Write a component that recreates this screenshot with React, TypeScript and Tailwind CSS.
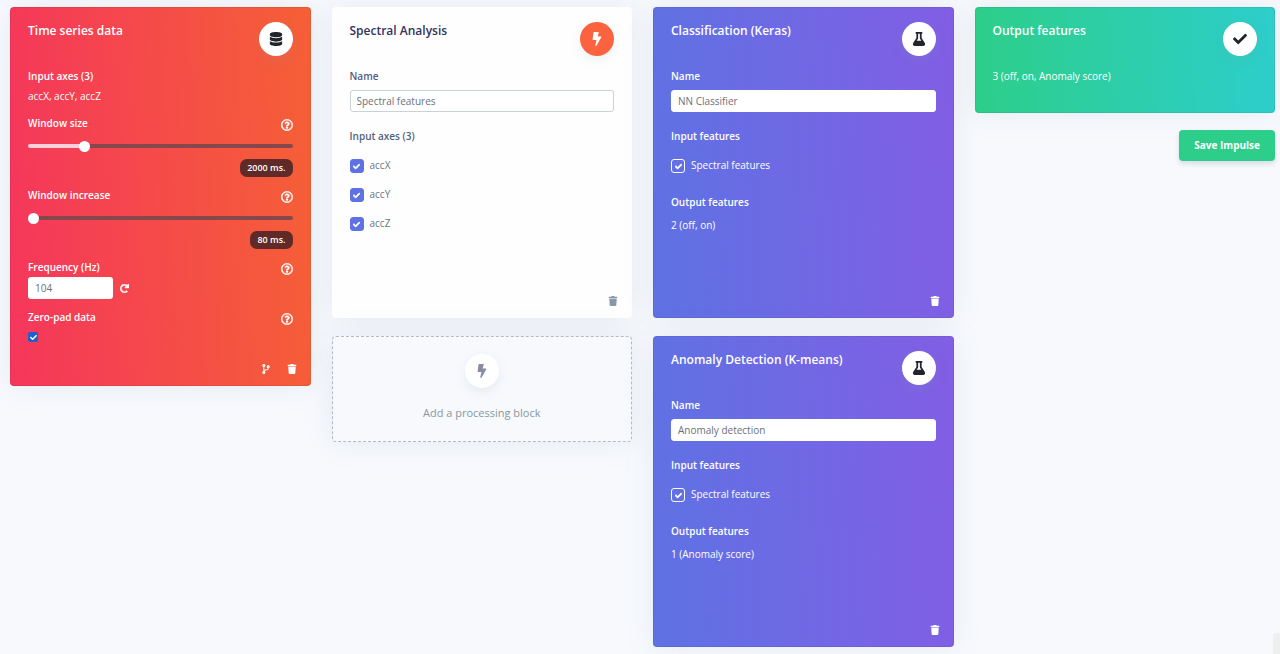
import { useId, useState } from "react";
import type { ReactNode } from "react";
import {
  FaBolt,
  FaCheck,
  FaCodeBranch,
  FaDatabase,
  FaFlask,
  FaRedo,
  FaRegQuestionCircle,
  FaTrash,
} from "react-icons/fa";

const softShadow = "shadow-[0_0_28px_rgba(136,152,170,0.15)]";
const edgedShadow =
  "shadow-[0_0_28px_rgba(136,152,170,0.15),inset_0_0_0_1px_rgba(0,0,0,0.06)]";

const tones = {
  data: `bg-[linear-gradient(87deg,#f5365c,#f56036)] text-white ${edgedShadow}`,
  plain: `bg-[#fefefe] text-[#525f7f] ${softShadow}`,
  learn: `bg-[linear-gradient(87deg,#5e72e4,#825ee4)] text-white ${edgedShadow}`,
  output: `bg-[linear-gradient(87deg,#2dce89,#2dcecc)] text-white ${edgedShadow}`,
};

function Card({
  tone,
  title,
  icon,
  className = "",
  children,
}: {
  tone: keyof typeof tones;
  title: string;
  icon: ReactNode;
  className?: string;
  children: ReactNode;
}) {
  const plain = tone === "plain";
  return (
    <section
      className={`flex flex-col rounded-[4px] px-[18px] pt-[15px] pb-3 ${tones[tone]} ${className}`}
    >
      <header className="mb-[10px] flex justify-between">
        <h2 className={`text-[12px] leading-[18px] font-semibold ${plain ? "text-[#32325d]" : ""}`}>
          {title}
        </h2>
        <span
          className={`flex size-[34px] items-center justify-center rounded-full text-[14px] shadow-[0_4px_12px_rgba(136,152,170,0.15)] ${
            plain ? "bg-[#fb6340] text-white" : "bg-white text-[#212529]"
          }`}
        >
          {icon}
        </span>
      </header>
      {children}
    </section>
  );
}

function HelpButton({ topic }: { topic: string }) {
  return (
    <button type="button" aria-label={`Help: ${topic}`} className="pt-1 text-[12px]">
      <FaRegQuestionCircle className="stroke-[16]" />
    </button>
  );
}

function DeleteButton() {
  return (
    <button type="button" aria-label="Delete block" className="text-[10px]">
      <FaTrash />
    </button>
  );
}

function SliderField({
  label,
  initial,
  min,
  max,
}: {
  label: string;
  initial: number;
  min: number;
  max: number;
}) {
  const id = useId();
  const [value, setValue] = useState(initial);
  const filled = ((value - min) / (max - min)) * 100;
  return (
    <div className="mb-2 flex flex-col">
      <div className="flex h-5 items-center justify-between">
        <label htmlFor={id} className="font-semibold">
          {label}
        </label>
        <HelpButton topic={label} />
      </div>
      <div className="flex h-[26px] items-center">
        <input
          id={id}
          type="range"
          min={min}
          max={max}
          step={80}
          value={value}
          onChange={(e) => setValue(Number(e.target.value))}
          style={{
            backgroundImage: `linear-gradient(to right, #fbd0dc ${filled}%, #86474d ${filled}%)`,
          }}
          className="h-1 w-full appearance-none rounded-[2px] [&::-webkit-slider-thumb]:size-[11px] [&::-webkit-slider-thumb]:appearance-none [&::-webkit-slider-thumb]:rounded-full [&::-webkit-slider-thumb]:bg-white"
        />
      </div>
      <output
        htmlFor={id}
        className="self-end rounded-[7px] bg-[#5f2a28] px-[7px] text-[9px] leading-[18px] font-semibold"
      >
        {value} ms.
      </output>
    </div>
  );
}

function NameField({ initial, bordered }: { initial: string; bordered?: boolean }) {
  const id = useId();
  return (
    <div className="mb-[14px] flex flex-col gap-1">
      <label htmlFor={id} className="font-semibold">
        Name
      </label>
      <input
        id={id}
        type="text"
        defaultValue={initial}
        className={`h-[22px] w-full rounded-[3px] border bg-white px-[6px] text-[10px] text-[#6b7177] ${
          bordered ? "border-[#cad1d7]" : "border-white"
        }`}
      />
    </div>
  );
}

function CheckRow({ label, outlined }: { label: string; outlined?: boolean }) {
  return (
    <label className={`flex items-start gap-[6px] ${outlined ? "" : "text-[#6c757d]"}`}>
      <span className="mt-[4px] grid size-[14px] place-items-center">
        <input
          type="checkbox"
          defaultChecked
          className={`peer col-start-1 row-start-1 size-[14px] appearance-none rounded-[3px] border ${
            outlined ? "border-white" : "border-[#5e72e4] checked:bg-[#5e72e4]"
          }`}
        />
        <FaCheck className="pointer-events-none invisible col-start-1 row-start-1 size-[7px] stroke-[40] text-white peer-checked:visible" />
      </span>
      {label}
    </label>
  );
}

function LearnCard({ title, name, outputs }: { title: string; name: string; outputs: string }) {
  return (
    <Card tone="learn" title={title} icon={<FaFlask />} className="min-h-[311px]">
      <NameField initial={name} />
      <h3 className="mb-[9px] font-semibold">Input features</h3>
      <CheckRow label="Spectral features" outlined />
      <h3 className="mt-[17px] mb-[3px] font-semibold">Output features</h3>
      <p>{outputs}</p>
      <footer className="mt-auto -mr-1 flex justify-end">
        <DeleteButton />
      </footer>
    </Card>
  );
}

export default function App() {
  return (
    <main className="relative min-h-screen overflow-hidden bg-[#f7f9fd] pt-[7px] pr-[5px] pb-[7px] pl-[10px] font-['Open_Sans',sans-serif] text-[10px] leading-[20px]">
      <div className="grid grid-cols-4 items-start gap-[21px]">
        <Card tone="data" title="Time series data" icon={<FaDatabase />}>
          <h3 className="font-semibold">Input axes (3)</h3>
          <p className="mb-[7px]">accX, accY, accZ</p>
          <SliderField label="Window size" initial={2000} min={80} max={9680} />
          <SliderField label="Window increase" initial={80} min={80} max={9680} />
          <div className="flex h-5 items-center justify-between">
            <label htmlFor="frequency" className="font-semibold">
              Frequency (Hz)
            </label>
            <HelpButton topic="Frequency" />
          </div>
          <div className="mb-2 flex items-center gap-[7px]">
            <input
              id="frequency"
              type="text"
              defaultValue="104"
              className="h-[22px] w-[85px] rounded-[3px] bg-white px-[7px] text-[10px] text-[#6b7177]"
            />
            <button type="button" aria-label="Reset frequency" className="text-[9px]">
              <FaRedo className="stroke-[30]" />
            </button>
          </div>
          <div className="flex h-5 items-center justify-between">
            <label htmlFor="zero-pad" className="font-semibold">
              Zero-pad data
            </label>
            <HelpButton topic="Zero-pad data" />
          </div>
          <span className="mt-[5px] mb-[22px] grid size-[10px] place-items-center">
            <input
              id="zero-pad"
              type="checkbox"
              defaultChecked
              className="peer col-start-1 row-start-1 size-[10px] appearance-none rounded-[2px] bg-white checked:bg-[#1f5fd0]"
            />
            <FaCheck className="pointer-events-none invisible col-start-1 row-start-1 size-[7px] text-white peer-checked:visible" />
          </span>
          <footer className="-mr-1 flex items-center justify-end gap-4">
            <button type="button" aria-label="Show versions" className="text-[10px]">
              <FaCodeBranch />
            </button>
            <DeleteButton />
          </footer>
        </Card>

        <div className="flex flex-col gap-[18px]">
          <Card tone="plain" title="Spectral Analysis" icon={<FaBolt />} className="min-h-[311px]">
            <NameField initial="Spectral features" bordered />
            <h3 className="mb-[9px] font-semibold">Input axes (3)</h3>
            <div className="flex flex-col gap-[9px]">
              <CheckRow label="accX" />
              <CheckRow label="accY" />
              <CheckRow label="accZ" />
            </div>
            <footer className="mt-auto -mr-1 flex justify-end text-[#8898aa]">
              <DeleteButton />
            </footer>
          </Card>
          <button
            type="button"
            className={`flex flex-col items-center rounded-[4px] border border-dashed border-[#b4b9c4] bg-[#f7f9fd] pt-[17px] pb-[18px] text-[11px] text-[#8898a0] ${softShadow}`}
          >
            <span className="mb-[15px] flex size-[34px] items-center justify-center rounded-full bg-white text-[14px] text-[#8a8ba0] shadow-[0_4px_12px_rgba(136,152,170,0.15)]">
              <FaBolt />
            </span>
            Add a processing block
          </button>
        </div>

        <div className="flex flex-col gap-[18px]">
          <LearnCard title="Classification (Keras)" name="NN Classifier" outputs="2 (off, on)" />
          <LearnCard
            title="Anomaly Detection (K-means)"
            name="Anomaly detection"
            outputs="1 (Anomaly score)"
          />
        </div>

        <div className="flex flex-col gap-[17px]">
          <Card
            tone="output"
            title="Output features"
            icon={<FaCheck />}
            className="min-h-[106px]"
          >
            <p>3 (off, on, Anomaly score)</p>
          </Card>
          <button
            type="button"
            className="self-end rounded-[4px] bg-[#2dce89] px-[15px] pt-[5px] pb-[6px] font-bold text-white shadow-[0_3px_5px_rgba(50,50,93,0.14)]"
          >
            Save Impulse
          </button>
        </div>
      </div>
      <div className="absolute right-0 bottom-0 h-[21px] w-[7px] rounded-tl-[3px] bg-[#efefef]" />
    </main>
  );
}
